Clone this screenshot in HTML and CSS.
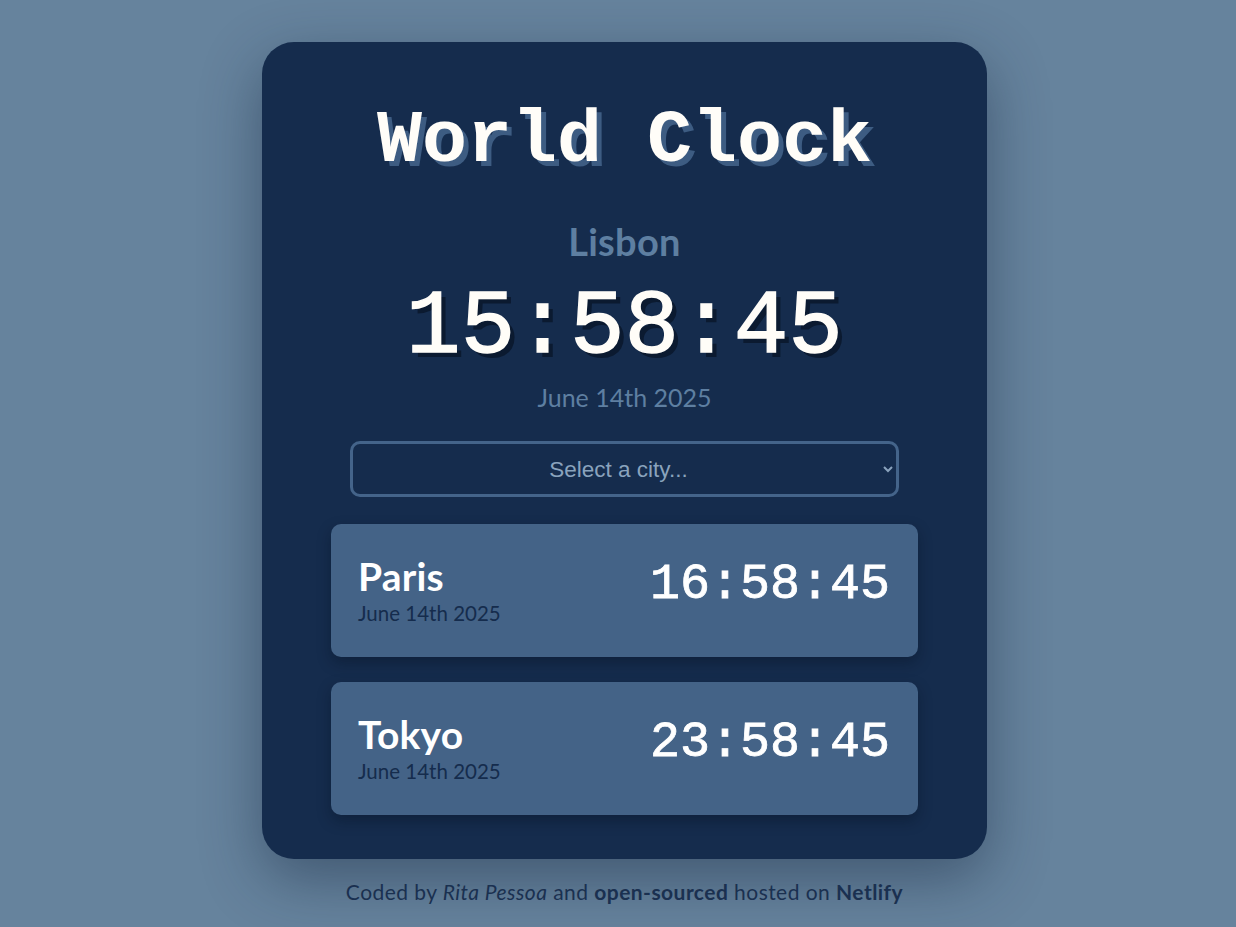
FILE: index.html
```html
<!DOCTYPE html>
<html lang="en">
<head>
<meta charset="utf-8">
<title>World Clock</title>
<link rel="stylesheet" href="styles.css">
</head>
<body>
<main class="page">
  <section class="container">
    <h1 class="title">World Clock</h1>
    <div class="current">
      <h2 class="current-city">Lisbon</h2>
      <div class="current-time">15:58:45</div>
      <div class="current-date">June 14th 2025</div>
    </div>
    <div class="select-wrap">
      <select class="city-select">
        <option>Select a city...</option>
      </select>
    </div>
    <div class="cities">
      <div class="city">
        <div class="city-info">
          <div class="city-name">Paris</div>
          <div class="city-date">June 14th 2025</div>
        </div>
        <div class="city-time">16:58:45</div>
      </div>
      <div class="city">
        <div class="city-info">
          <div class="city-name">Tokyo</div>
          <div class="city-date">June 14th 2025</div>
        </div>
        <div class="city-time">23:58:45</div>
      </div>
    </div>
  </section>
  <footer class="footer">
    Coded by <em>Rita Pessoa</em> and <strong>open-sourced</strong> hosted on <strong>Netlify</strong>
  </footer>
</main>
</body>
</html>
```

FILE: styles.css
```css
* { box-sizing: border-box; }
html, body { margin: 0; padding: 0; }
body {
  background: #66839d;
  font-family: "Lato", "Open Sans", sans-serif;
  min-height: 927px;
}
.page {
  display: flex;
  flex-direction: column;
  align-items: center;
  padding: 42px 0 0 13px;
}
.container {
  width: 725px;
  background: #152c4d;
  border-radius: 32px;
  box-shadow: 0 20px 60px rgba(20, 35, 60, 0.45);
  padding: 0 69px 44px;
  display: flex;
  flex-direction: column;
  align-items: center;
}
.title {
  margin: 55px 0 0;
  font-family: "Liberation Mono", monospace;
  font-weight: 700;
  font-size: 75px;
  line-height: 90px;
  color: #fffdf8;
  text-shadow: 5px 5px 0 #3d5c82;
  letter-spacing: 0;
}
.current {
  display: flex;
  flex-direction: column;
  align-items: center;
  margin-top: 32px;
}
.current-city {
  margin: 0;
  font-size: 38px;
  font-weight: 700;
  line-height: 44px;
  color: #5e7fa1;
  letter-spacing: 0.3px;
}
.current-time {
  font-family: "Liberation Mono", monospace;
  font-size: 91px;
  line-height: 100px;
  color: #fffdf8;
  -webkit-text-stroke: 1.5px #fffdf8;
  text-shadow: 5px 5px 0 #0b1a30;
  margin-top: 15px;
}
.current-date {
  font-size: 25px;
  line-height: 30px;
  color: #5e7fa1;
  margin-top: 4px;
}
.select-wrap {
  width: 549px;
  margin-top: 29px;
}
.city-select {
  width: 100%;
  height: 56px;
  background: #152c4d;
  border: 3px solid #44648a;
  border-radius: 10px;
  color: #8aa3bd;
  font-family: "Liberation Sans", Arial, sans-serif;
  font-size: 22.5px;
  text-align: center;
  text-align-last: center;
  padding: 0 10px;
}
.cities {
  width: 100%;
  margin-top: 27px;
  display: flex;
  flex-direction: column;
  gap: 25px;
}
.city {
  height: 133px;
  background: #446387;
  border-radius: 10px;
  box-shadow: 0 6px 14px rgba(5, 15, 30, 0.35);
  display: flex;
  align-items: center;
  justify-content: space-between;
  padding: 0 28px 0 27px;
}
.city-info { display: flex; flex-direction: column; }
.city-name {
  font-size: 39px;
  font-weight: 700;
  line-height: 42px;
  color: #ffffff;
  letter-spacing: 0.2px;
}
.city-date {
  font-size: 20.5px;
  line-height: 26px;
  color: #152c4d;
  margin-top: 3px;
}
.city-time {
  font-family: "Liberation Mono", monospace;
  font-size: 50px;
  line-height: 60px;
  color: #ffffff;
  -webkit-text-stroke: 0.8px #ffffff;
  margin-top: -12px;
}
.footer {
  margin-top: 21px;
  font-size: 21px;
  line-height: 24px;
  color: #1a3050;
  letter-spacing: 0.45px;
}
.footer strong { font-weight: 700; }
```
